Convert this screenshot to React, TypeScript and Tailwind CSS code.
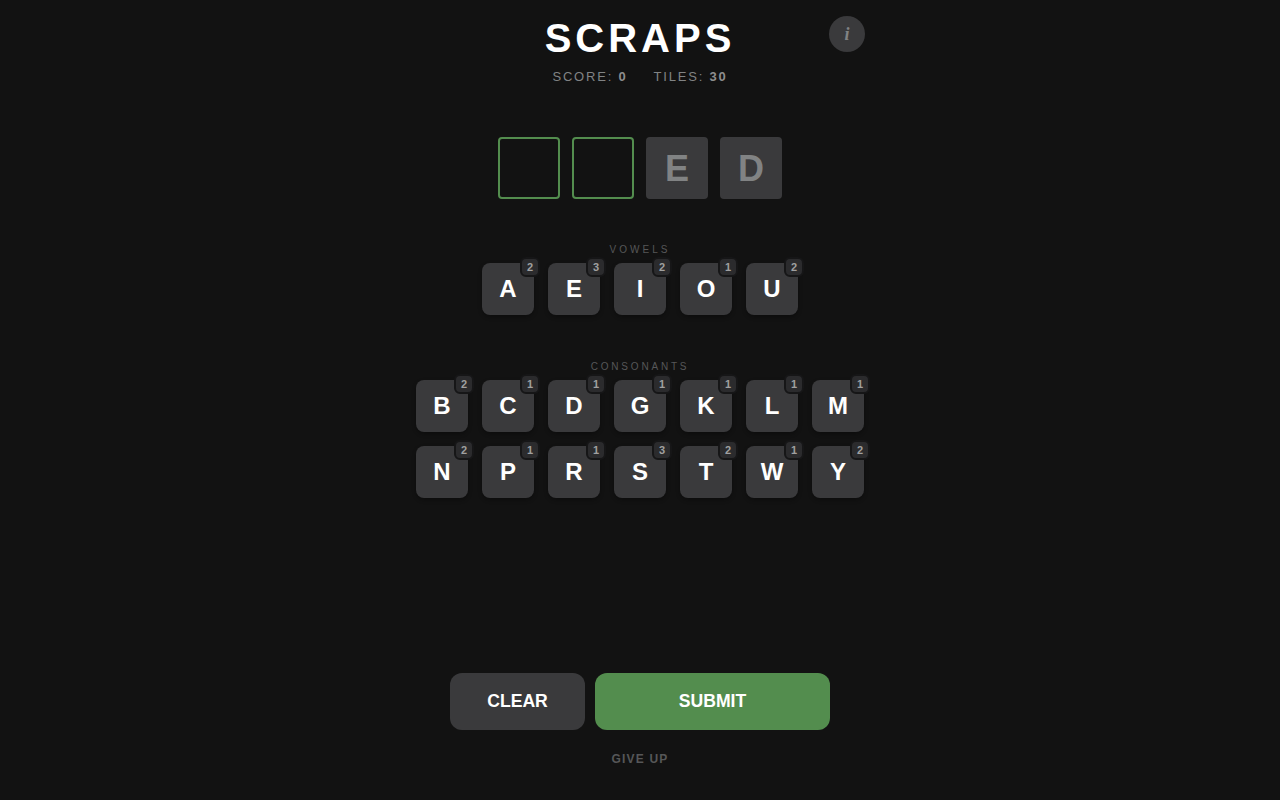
const vowels: [string, number][] = [["A", 2], ["E", 3], ["I", 2], ["O", 1], ["U", 2]]
const row1: [string, number][] = [["B", 2], ["C", 1], ["D", 1], ["G", 1], ["K", 1], ["L", 1], ["M", 1]]
const row2: [string, number][] = [["N", 2], ["P", 1], ["R", 1], ["S", 3], ["T", 2], ["W", 1], ["Y", 2]]

const Tile = ({ letter, count }: { letter: string; count: number }) => (
  <button className="relative flex h-[52px] w-[52px] items-center justify-center rounded-lg bg-[#3a3a3c] text-[24px] font-bold text-white shadow-[0_2px_4px_rgba(0,0,0,0.3)]">
    {letter}
    <span className="absolute -top-[6px] -right-[6px] flex h-5 w-5 items-center justify-center rounded-[6px] border-2 border-[#161617] bg-[#2b2b2d] text-[11px] font-bold text-[#a0a0a0]">
      {count}
    </span>
  </button>
)

const TileRow = ({ tiles }: { tiles: [string, number][] }) => (
  <div className="flex justify-center gap-[14px]">
    {tiles.map(([letter, count]) => (
      <Tile key={letter} letter={letter} count={count} />
    ))}
  </div>
)

export default function App() {
  return (
    <div className="flex h-[800px] flex-col items-center overflow-hidden bg-[#121212] font-['Liberation_Sans',Arial,sans-serif]">
      <div className="relative flex w-[480px] flex-col items-center pt-[15px]">
        <h1 className="text-[40px] leading-[46px] font-bold tracking-[4px] text-white">SCRAPS</h1>
        <div className="mt-[8px] flex gap-[26px] text-[13px] leading-[16px] tracking-[1.8px] text-[#818384]">
          <span>
            SCORE: <b className="text-[#8e8e8e]">0</b>
          </span>
          <span>
            TILES: <b className="text-[#8e8e8e]">30</b>
          </span>
        </div>
        <button className="absolute top-4 right-[15px] flex h-9 w-9 items-center justify-center rounded-full bg-[#3a3a3c] font-['Liberation_Serif',serif] text-[18px] font-bold text-[#818384] italic">
          i
        </button>
      </div>

      <div className="mt-[52px] flex gap-3">
        <div className="h-[62px] w-[62px] rounded-[4px] border-2 border-[#538d4e]" />
        <div className="h-[62px] w-[62px] rounded-[4px] border-2 border-[#538d4e]" />
        <div className="flex h-[62px] w-[62px] items-center justify-center rounded-[4px] bg-[#3a3a3c] pt-[1px] text-[36px] font-bold text-[#818384]">
          E
        </div>
        <div className="flex h-[62px] w-[62px] items-center justify-center rounded-[4px] bg-[#3a3a3c] pt-[1px] text-[36px] font-bold text-[#818384]">
          D
        </div>
      </div>

      <div className="mt-[45px] text-center text-[10px] leading-[11px] tracking-[3px] text-[#565758]">VOWELS</div>
      <div className="mt-[8px]">
        <TileRow tiles={vowels} />
      </div>

      <div className="mt-[46px] text-center text-[10px] leading-[11px] tracking-[2.8px] text-[#565758]">CONSONANTS</div>
      <div className="mt-[8px] flex flex-col gap-[14px]">
        <TileRow tiles={row1} />
        <TileRow tiles={row2} />
      </div>

      <div className="mt-[175px] flex gap-[10px]">
        <button className="h-[57px] w-[135px] rounded-xl bg-[#3a3a3c] text-[17.6px] font-bold text-white">CLEAR</button>
        <button className="h-[57px] w-[235px] rounded-xl bg-[#538d4e] text-[17.6px] font-bold text-white">SUBMIT</button>
      </div>
      <button className="mt-[22px] text-[12px] leading-[14px] font-bold tracking-[1.2px] text-[#565758]">GIVE UP</button>
    </div>
  )
}
